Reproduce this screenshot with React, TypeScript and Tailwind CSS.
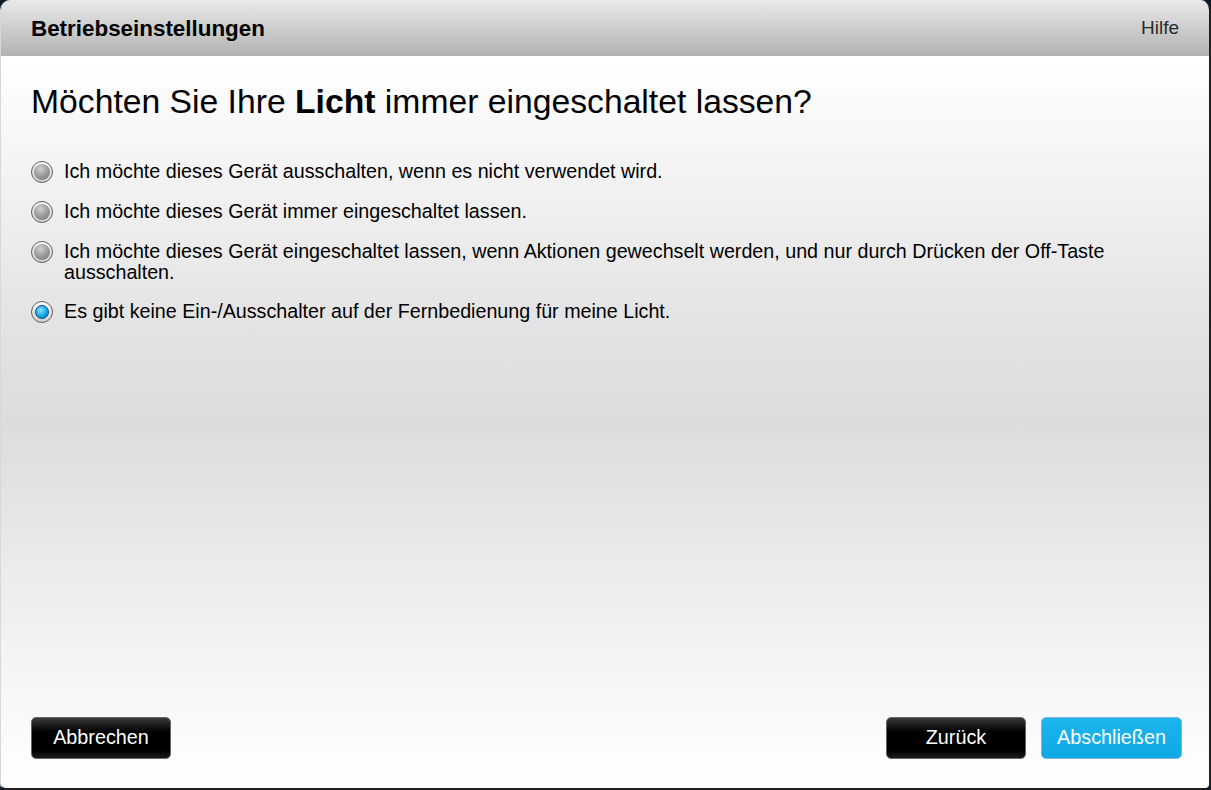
import React, { useState } from 'react';

const options = [
    'Ich möchte dieses Gerät ausschalten, wenn es nicht verwendet wird.',
    'Ich möchte dieses Gerät immer eingeschaltet lassen.',
    'Ich möchte dieses Gerät eingeschaltet lassen, wenn Aktionen gewechselt werden, und nur durch Drücken der Off-Taste ausschalten.',
    'Es gibt keine Ein-/Ausschalter auf der Fernbedienung für meine Licht.',
];

const Radio: React.FC<{ checked: boolean }> = ({ checked }) => (
    <span className="flex h-[22px] w-[22px] shrink-0 items-center justify-center rounded-full border border-[#5f5f5f] bg-[linear-gradient(#fafafa,#cfcfcf)]">
        <span
            className={
                checked
                    ? 'h-[14px] w-[14px] rounded-full border border-[#0d4f7a] bg-[radial-gradient(circle_at_40%_35%,#8fe3ff,#14a6e8_55%,#0a6fb0)]'
                    : 'h-[16px] w-[16px] rounded-full bg-[radial-gradient(circle_at_40%_30%,#cfcfcf,#929292_60%,#767676)]'
            }
        />
    </span>
);

const App: React.FC = () => {
    const [selected, setSelected] = useState(3);

    return (
        <div className="h-[790px] w-[1211px] bg-[#0f1a28] font-['Liberation_Sans',Arial,sans-serif]">
            <div className="flex h-full flex-col overflow-hidden rounded-t-[10px] rounded-b-[6px] border-l border-r-2 border-b-2 border-[#d8d8d8] border-r-[#202020] border-b-[#202020]">
                {/* Header */}
                <div className="flex h-[57px] shrink-0 items-center justify-between border-b border-white bg-[linear-gradient(#e9e9e9,#b2b2b2)] pl-[30px] pr-[30px] pt-[1px]">
                    <h1 className="text-[22.4px] font-bold text-black">Betriebseinstellungen</h1>
                    <span className="text-[19px] text-[#2a2a2a]">Hilfe</span>
                </div>

                {/* Body */}
                <div className="flex flex-1 flex-col bg-[linear-gradient(#ffffff_0%,#e4e4e4_35%,#dcdcdc_50%,#f2f2f2_80%,#ffffff_100%)] pl-[30px] pr-[27px]">
                    <h2 className="mt-[24px] text-[33.7px] leading-[40px] text-black">
                        Möchten Sie Ihre <b>Licht</b> immer eingeschaltet lassen?
                    </h2>

                    <div className="mt-[40px] flex flex-col gap-[18px]">
                        {options.map((opt, i) => (
                            <label
                                key={i}
                                className="flex cursor-pointer items-start gap-[11px]"
                                onClick={() => setSelected(i)}
                            >
                                <Radio checked={selected === i} />
                                <span className="max-w-[1080px] text-[19.7px] leading-[21px] text-black">{opt}</span>
                            </label>
                        ))}
                    </div>

                    <div className="mt-auto mb-[29px] flex items-center">
                        <button className="h-[42px] w-[140px] rounded-[5px] border border-[#666] bg-[linear-gradient(#3a3a3a,#000_35%,#000_80%,#1c1c1c)] text-[19.8px] text-white">
                            Abbrechen
                        </button>
                        <button className="ml-auto h-[42px] w-[140px] rounded-[5px] border border-[#666] bg-[linear-gradient(#3a3a3a,#000_35%,#000_80%,#1c1c1c)] text-[19.8px] text-white">
                            Zurück
                        </button>
                        <button className="ml-[15px] h-[42px] w-[141px] rounded-[5px] border border-[#7fb6d6] bg-[linear-gradient(#1eb4ec,#0ea9e6)] text-[19.8px] text-white">
                            Abschließen
                        </button>
                    </div>
                </div>
            </div>
        </div>
    );
};

export default App;
